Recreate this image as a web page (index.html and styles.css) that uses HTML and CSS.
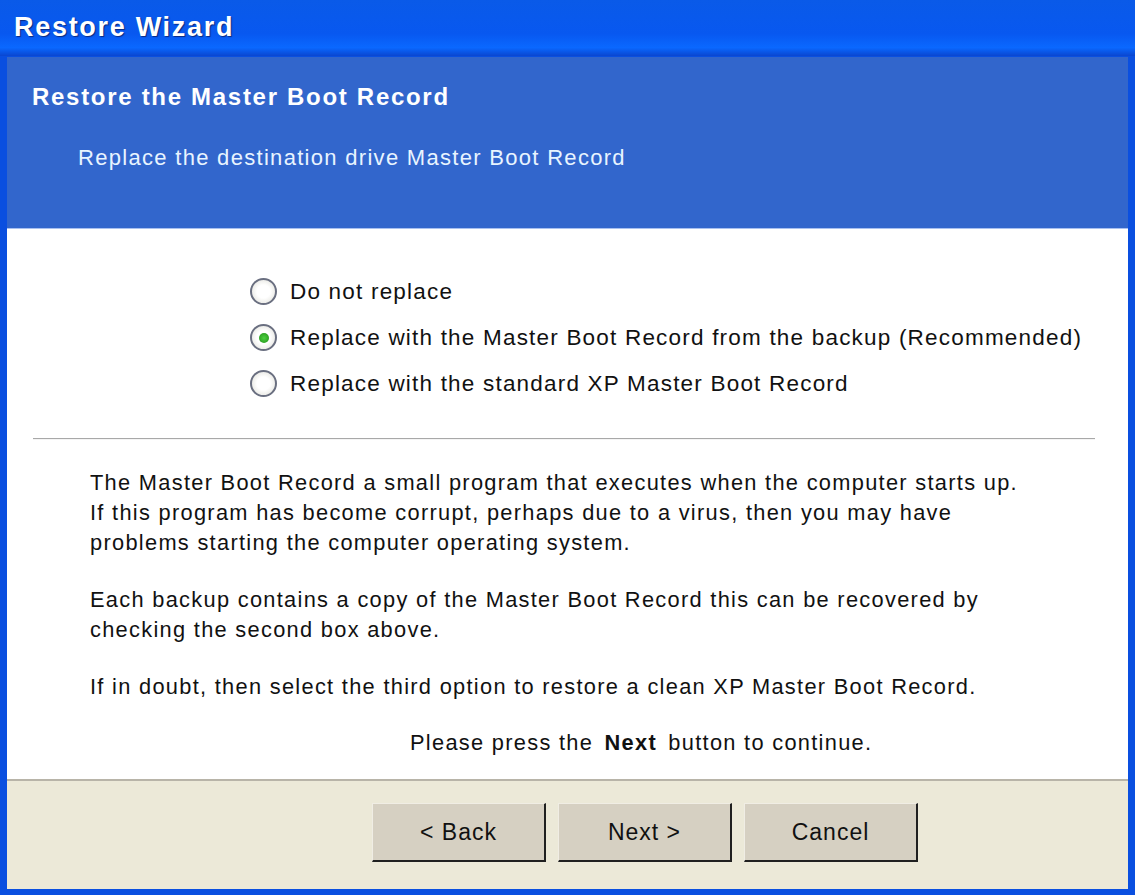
FILE: index.html
```html
<!DOCTYPE html>
<html lang="en">
<head>
    <meta charset="UTF-8">
    <meta name="viewport" content="width=device-width, initial-scale=1.0">
    <title>Restore Wizard</title>
    <link rel="stylesheet" href="styles.css">
</head>
<body>
    <div class="window">
        <div class="title-bar">Restore Wizard</div>

        <div class="frame">
            <div class="header">
                <h1>Restore the Master Boot Record</h1>
                <p>Replace the destination drive Master Boot Record</p>
            </div>

            <div class="content">
                <div class="options">
                    <label class="option">
                        <input type="radio" name="mbr" value="none">
                        <span class="radio"></span>
                        Do not replace
                    </label>
                    <label class="option">
                        <input type="radio" name="mbr" value="backup" checked>
                        <span class="radio"></span>
                        Replace with the Master Boot Record from the backup (Recommended)
                    </label>
                    <label class="option">
                        <input type="radio" name="mbr" value="standard">
                        <span class="radio"></span>
                        Replace with the standard XP Master Boot Record
                    </label>
                </div>

                <hr class="divider">

                <div class="info">
                    <p>The Master Boot Record a small program that executes when the computer starts up.<br>
                    If this program has become corrupt, perhaps due to a virus, then you may have<br>
                    problems starting the computer operating system.</p>
                    <p>Each backup contains a copy of the Master Boot Record this can be recovered by<br>
                    checking the second box above.</p>
                    <p>If in doubt, then select the third option to restore a clean XP Master Boot Record.</p>
                </div>

                <p class="hint">Please press the <b>Next</b> button to continue.</p>
            </div>

            <div class="footer">
                <button type="button">&lt; Back</button>
                <button type="button">Next &gt;</button>
                <button type="button">Cancel</button>
            </div>
        </div>
    </div>
</body>
</html>
```

FILE: styles.css
```css
* {
    margin: 0;
    padding: 0;
    box-sizing: border-box;
}

body {
    width: 1135px;
    height: 895px;
    overflow: hidden;
    background: #0a4fe0;
    font-family: 'Liberation Sans', Arial, sans-serif;
}

.window {
    display: flex;
    flex-direction: column;
    height: 100%;
}

.title-bar {
    height: 56px;
    padding: 12px 0 0 14px;
    background: linear-gradient(to bottom, #0a5ae8 0%, #0858f0 60%, #0a68ff 85%, #0a46d0 100%);
    color: #fff;
    font-size: 27px;
    font-weight: bold;
    letter-spacing: 1.7px;
    text-shadow: 1px 1px 1px #0a2a80;
}

.frame {
    flex: 1;
    display: flex;
    flex-direction: column;
    margin: 1px 7px 6px 7px;
    background: #fff;
}

/* blue banner at the top of the page */
.header {
    height: 172px;
    padding: 26px 0 0 25px;
    background: #3266cc;
    border-bottom: 1px solid #a8c0f0;
    color: #fff;
}

.header h1 {
    font-size: 24px;
    font-weight: bold;
    letter-spacing: 1.7px;
}

.header p {
    margin: 34px 0 0 46px;
    font-size: 22px;
    letter-spacing: 1.3px;
    color: #e8f4ff;
}

.content {
    flex: 1;
    padding: 49px 33px 0 26px;
}

.options {
    display: flex;
    flex-direction: column;
    gap: 19px;
    padding-left: 217px;
}

.option {
    display: flex;
    align-items: center;
    gap: 13px;
    height: 27px;
    font-size: 22.5px;
    letter-spacing: 1.2px;
    color: #111;
    cursor: pointer;
}

.option input {
    display: none;
}

.radio {
    width: 27px;
    height: 27px;
    border-radius: 50%;
    border: 2px solid #6a6f80;
    background: radial-gradient(circle, #ffffff 40%, #dcdcd4 100%);
    display: flex;
    align-items: center;
    justify-content: center;
}

.option input:checked + .radio::after {
    content: "";
    width: 10px;
    height: 10px;
    border-radius: 50%;
    background: radial-gradient(circle, #4cd040 0%, #229018 100%);
}

.divider {
    margin: 41px 0 0 0;
    border: none;
    border-top: 1px solid #a8a8a8;
    border-bottom: 1px solid #f4f4f4;
}

.info {
    padding: 28px 0 0 57px;
    font-size: 21.8px;
    line-height: 30px;
    letter-spacing: 1.3px;
    color: #111;
}

.info p {
    margin-bottom: 27px;
}

.hint {
    margin-top: 28px;
    padding-left: 377px;
    font-size: 21.8px;
    letter-spacing: 1.3px;
    color: #111;
}

.hint b {
    font-weight: bold;
    margin: 0 4px;
}

.footer {
    height: 110px;
    display: flex;
    gap: 12px;
    padding: 22px 0 0 365px;
    background: #ece9d8;
    border-top: 2px solid #b8b4a8;
}

.footer button {
    width: 174px;
    height: 59px;
    background: #d6d0c2;
    border: none;
    border-right: 2px solid #202020;
    border-bottom: 2px solid #202020;
    border-top: 1px solid #f0ede4;
    border-left: 1px solid #f0ede4;
    font-family: 'Liberation Sans', Arial, sans-serif;
    font-size: 23px;
    letter-spacing: 1px;
    color: #111;
}
```
